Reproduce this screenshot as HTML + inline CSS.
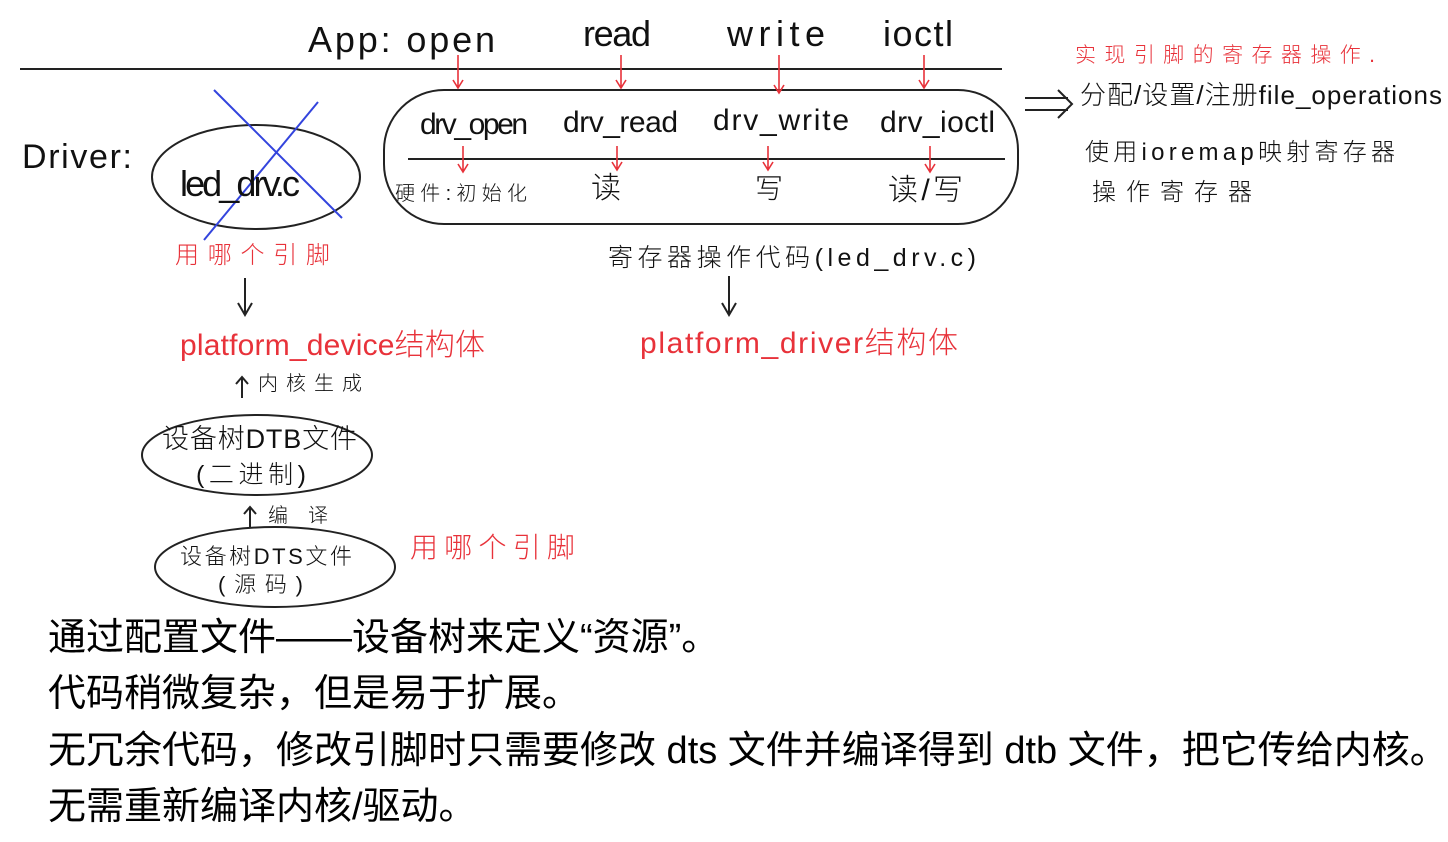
<!DOCTYPE html>
<html><head><meta charset="utf-8">
<style>
html,body{margin:0;padding:0;background:#fff;width:1448px;height:842px;overflow:hidden}
svg{position:absolute;left:0;top:0}
.h{font-family:"Liberation Sans","Noto Sans CJK SC",sans-serif;fill:#111;font-weight:300}
.r{fill:#e8323a}
.bt{position:absolute;left:48px;font-family:"Liberation Sans","Noto Sans CJK SC",sans-serif;font-size:38px;color:#000;white-space:nowrap;line-height:1}
</style></head><body>
<svg width="1448" height="842" viewBox="0 0 1448 842">
<g stroke="#222" stroke-width="2" fill="none">
<line x1="20" y1="69" x2="1002" y2="69"/>
<rect x="384" y="90" width="634" height="134" rx="60"/>
<line x1="408" y1="159" x2="1005" y2="159"/>
<ellipse cx="256" cy="177" rx="104" ry="52"/>
<ellipse cx="257" cy="455" rx="115" ry="40"/>
<ellipse cx="275" cy="567" rx="120" ry="40"/>
<path d="M245,278 L245,315 M238,303 L245,315 L252,303"/>
<path d="M729,276 L729,315 M722,303 L729,315 L736,303"/>
<path d="M242,398 L242,378 M236,384 L242,377 L248,384"/>
<path d="M250,528 L250,508 M244,514 L250,507 L256,514"/>
<path d="M1025,98 L1068,98 M1025,110 L1068,110 M1058,90 L1072,104 L1058,118"/>
</g>
<g stroke="#e8323a" stroke-width="1.6" fill="none">
<path d="M458,55 L458,88 M453,80 L458,88 L463,80"/>
<path d="M621,55 L621,88 M616,80 L621,88 L626,80"/>
<path d="M779,55 L779,93 M774,85 L779,93 L784,85"/>
<path d="M924,55 L924,88 M919,80 L924,88 L929,80"/>
<path d="M463,146 L463,172 M458,164 L463,172 L468,164"/>
<path d="M617,146 L617,170 M612,162 L617,170 L622,162"/>
<path d="M768,146 L768,170 M763,162 L768,170 L773,162"/>
<path d="M930,146 L930,172 M925,164 L930,172 L935,164"/>
</g>
<g stroke="#3344dd" stroke-width="2"><line x1="214" y1="90" x2="342" y2="218"/><line x1="318" y1="102" x2="204" y2="240"/></g>
<g class="h">
<text x="308" y="52" font-size="36" textLength="187">App: open</text>
<text x="583" y="46" font-size="36" textLength="68">read</text>
<text x="727" y="46" font-size="36" textLength="98">write</text>
<text x="883" y="46" font-size="36" textLength="70">ioctl</text>
<text x="420" y="134" font-size="30" textLength="108">drv_open</text>
<text x="563" y="132" font-size="30" textLength="115">drv_read</text>
<text x="713" y="130" font-size="30" textLength="136">drv_write</text>
<text x="880" y="132" font-size="30" textLength="115">drv_ioctl</text>
<text x="395" y="200" font-size="20" textLength="132">硬件:初始化</text>
<text x="591" y="198" font-size="30">读</text>
<text x="755" y="198" font-size="28">写</text>
<text x="888" y="200" font-size="30" textLength="75">读/写</text>
<text x="22" y="168" font-size="34" textLength="110">Driver:</text>
<text x="180" y="196" font-size="36" textLength="120">led_drv.c</text>
<text x="1080" y="104" font-size="26" textLength="362">分配/设置/注册file_operations</text>
<text x="1085" y="160" font-size="24" textLength="310">使用ioremap映射寄存器</text>
<text x="1092" y="200" font-size="24" textLength="160">操作寄存器</text>
<text x="608" y="266" font-size="25" textLength="368">寄存器操作代码(led_drv.c)</text>
<text x="258" y="390" font-size="20" textLength="104">内核生成</text>
<text x="162" y="448" font-size="27" textLength="195">设备树DTB文件</text>
<text x="196" y="483" font-size="25" textLength="110">(二进制)</text>
<text x="268" y="522" font-size="20" textLength="60">编译</text>
<text x="180" y="564" font-size="22" textLength="172">设备树DTS文件</text>
<text x="218" y="592" font-size="22" textLength="85">(源码)</text>
</g>
<g class="h r">
<text x="1075" y="62" font-size="21" textLength="300">实现引脚的寄存器操作.</text>
<text x="175" y="263" font-size="24" textLength="155">用哪个引脚</text>
<text x="180" y="355" font-size="30" textLength="305">platform_device结构体</text>
<text x="640" y="353" font-size="30" textLength="318">platform_driver结构体</text>
<text x="410" y="557" font-size="28" textLength="165">用哪个引脚</text>
</g>
</svg>
<div class="bt" style="top:619px">通过配置文件——设备树来定义“资源”。</div>
<div class="bt" style="top:675px">代码稍微复杂，但是易于扩展。</div>
<div class="bt" style="top:732px">无冗余代码，修改引脚时只需要修改 dts 文件并编译得到 dtb 文件，把它传给内核。</div>
<div class="bt" style="top:788px">无需重新编译内核/驱动。</div>
</body></html>
